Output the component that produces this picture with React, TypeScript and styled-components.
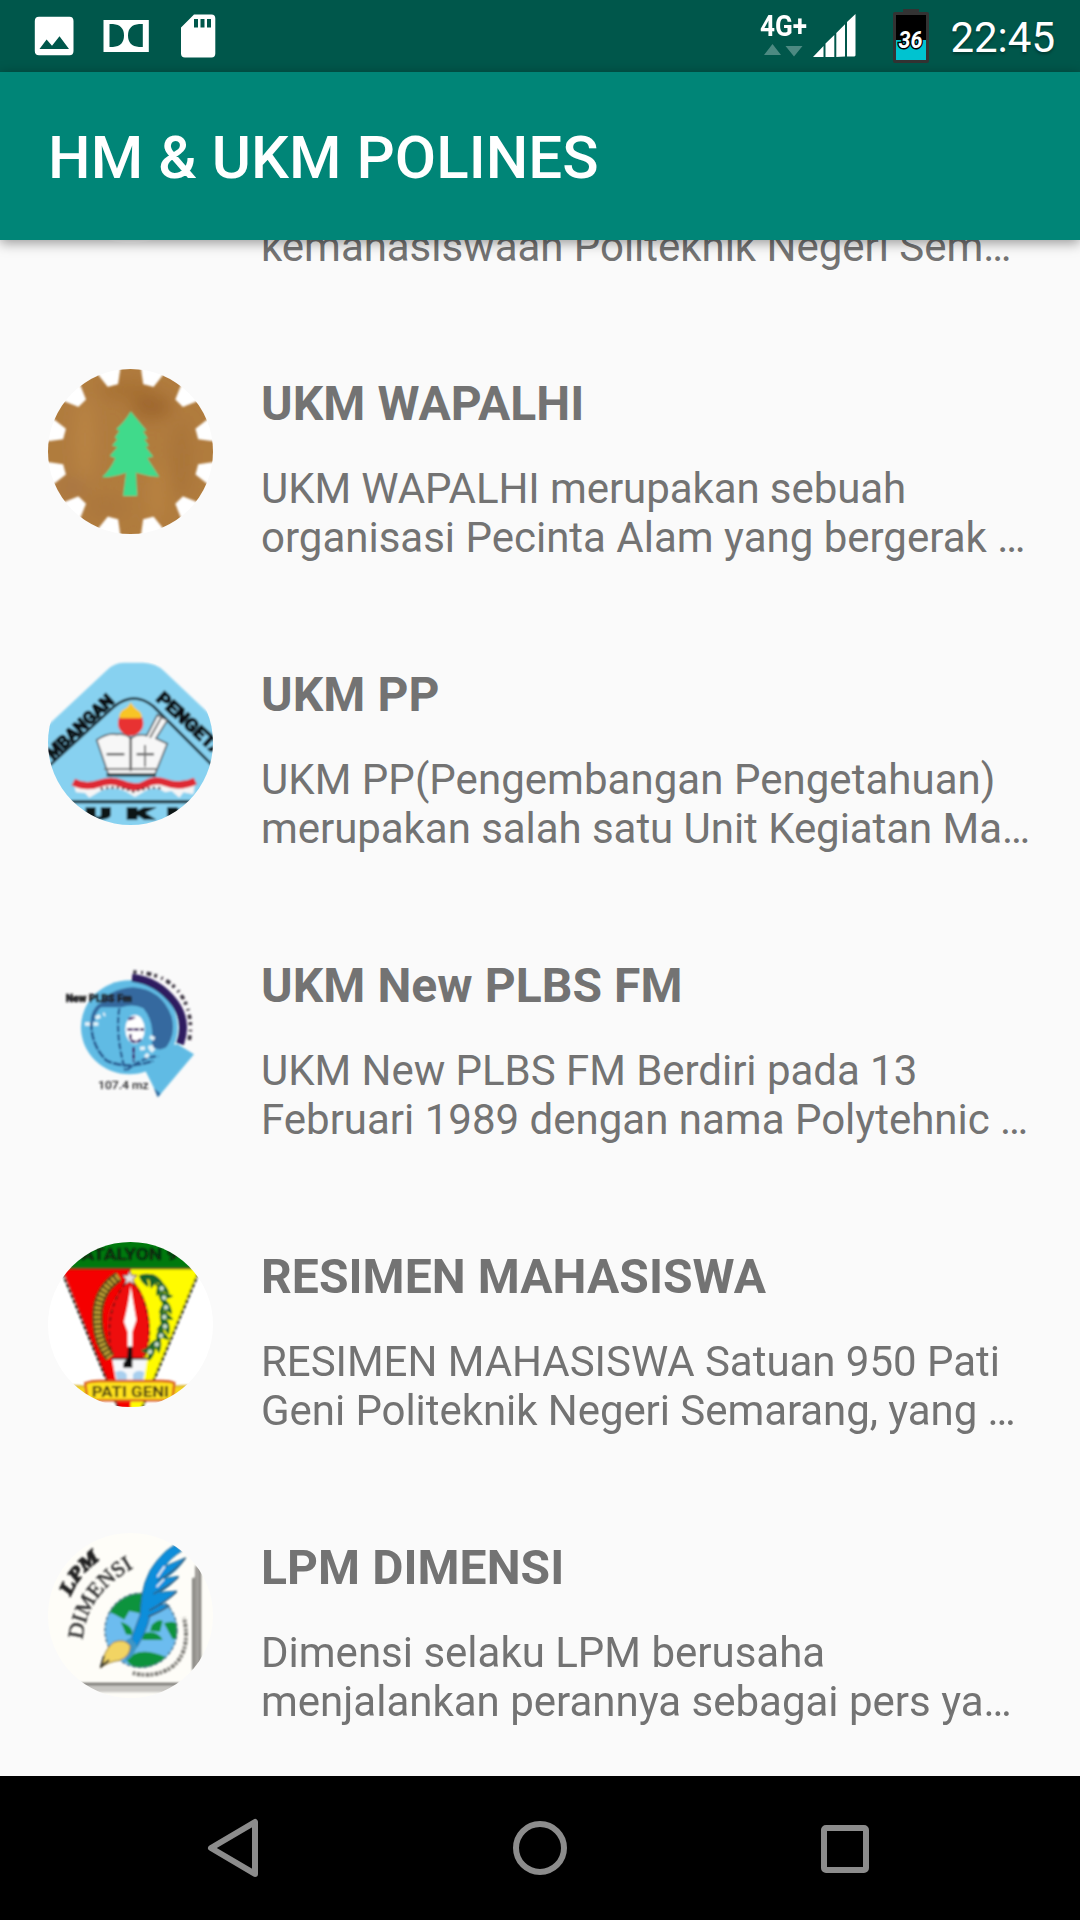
import React from "react";
import styled, { createGlobalStyle } from "styled-components";

const GlobalStyle = createGlobalStyle`
  * { box-sizing: border-box; }
  body { margin: 0; background: #fafafa; font-family: Roboto, "Noto Sans", sans-serif; }
`;

const Screen = styled.div`
  width: 1080px;
  height: 1920px;
  display: flex;
  flex-direction: column;
  overflow: hidden;
  background: #fafafa;
`;

const StatusBar = styled.header`
  height: 72px;
  flex: none;
  display: flex;
  justify-content: space-between;
  background: #00574b;
  padding: 0 25px 0 34px;
`;

const StatusGroup = styled.div`
  display: flex;
  align-items: flex-start;
`;

const StatusIcon = styled.svg<{ $left?: number; $top: number }>`
  display: block;
  flex: none;
  margin-left: ${(p) => p.$left ?? 0}px;
  margin-top: ${(p) => p.$top}px;
`;

const Network = styled.div`
  width: 50px;
  margin-top: 12px;
  display: flex;
  flex-direction: column;
  align-items: flex-start;
`;

const NetworkLabel = styled.span`
  color: #fff;
  font-size: 29px;
  font-weight: 700;
  line-height: 29px;
  transform: scaleX(0.9);
  transform-origin: left;
`;

const Clock = styled.time`
  margin-left: 21px;
  color: #fff;
  font-size: 42px;
  line-height: 49px;
  padding-top: 13px;
  text-shadow: 0 2px 3px rgba(0, 0, 0, 0.35);
`;

const AppBar = styled.div`
  height: 168px;
  flex: none;
  z-index: 1;
  display: flex;
  align-items: center;
  padding: 4px 48px 0;
  background: #008577;
  box-shadow: 0 3px 12px rgba(0, 0, 0, 0.4);
`;

const AppTitle = styled.h1`
  margin: 0;
  color: #fff;
  font-size: 60px;
  font-weight: 500;
  line-height: 70px;
  letter-spacing: 0.06px;
  white-space: nowrap;
`;

const List = styled.main`
  height: 1536px;
  flex: none;
  display: flex;
  flex-direction: column;
  justify-content: flex-end;
  overflow: hidden;
`;

const Row = styled.article`
  height: 291px;
  flex: none;
  display: flex;
  gap: 48px;
  padding: 48px 0 0 48px;
`;

const Avatar = styled.svg`
  width: 165px;
  height: 165px;
  flex: none;
  display: block;
  border-radius: 50%;
`;

const RowText = styled.div`
  padding-top: 7px;
`;

const RowTitle = styled.h2`
  margin: 0 0 32px;
  color: #737373;
  font-size: 48px;
  font-weight: 700;
  line-height: 56px;
  letter-spacing: 0.07px;
  white-space: nowrap;
`;

const RowLine = styled.p<{ $tracking?: number }>`
  margin: 0;
  color: #737373;
  font-size: 42px;
  line-height: 49px;
  letter-spacing: ${(p) => p.$tracking ?? 0}px;
  white-space: nowrap;
`;

const NavBar = styled.nav`
  height: 144px;
  flex: none;
  display: flex;
  justify-content: space-between;
  align-items: center;
  padding: 0 205px 0 201px;
  background: #000;
`;

const NavButton = styled.button`
  width: 64px;
  height: 64px;
  padding: 0;
  border: 0;
  background: none;
`;

const Soften = ({ id, amount }: { id: string; amount: number }) => (
  <filter id={id} x="-10%" y="-10%" width="120%" height="120%">
    <feGaussianBlur stdDeviation={amount} />
  </filter>
);

const gearPoints = Array.from({ length: 12 })
  .flatMap((_, i) =>
    [
      [-10.5, 206],
      [-6.8, 256],
      [6.8, 256],
      [10.5, 206],
    ].map(([offset, radius]) => {
      const a = ((i * 30 + offset - 90) * Math.PI) / 180;
      return `${(302 + radius * Math.cos(a)).toFixed(1)},${(305 + radius * Math.sin(a)).toFixed(1)}`;
    })
  )
  .join(" ");

const WapalhiLogo = () => (
  <Avatar viewBox="54 57 495 495">
    <defs>
      <Soften id="gearSoft" amount={3.2} />
      <Soften id="woodSoft" amount={24} />
      <clipPath id="gearClip"><polygon points={gearPoints} /></clipPath>
    </defs>
    <rect x="54" y="57" width="495" height="495" fill="#fff" />
    <g filter="url(#gearSoft)">
      <g clipPath="url(#gearClip)">
        <rect x="40" y="40" width="520" height="520" fill="#b07b3e" />
        <g filter="url(#woodSoft)">
          <ellipse cx="365" cy="170" rx="60" ry="38" fill="#9f682d" />
          <ellipse cx="290" cy="120" rx="80" ry="25" fill="#a67030" />
          <ellipse cx="165" cy="270" rx="28" ry="130" fill="#b98444" />
          <ellipse cx="455" cy="330" rx="30" ry="120" fill="#a97439" />
          <ellipse cx="380" cy="430" rx="28" ry="90" fill="#b8823f" />
          <ellipse cx="130" cy="410" rx="40" ry="30" fill="#a97644" />
          <ellipse cx="230" cy="470" rx="60" ry="28" fill="#aa763a" />
        </g>
      </g>
      <path
        fill="#40da8b"
        d="M302 184L350 242L339 243L354 266L343 268L357 287L347 290L370 320L352 324L388 381Q350 378 318 368L322 438H279L288 368Q250 382 216 382Q240 360 256 325L239 318L262 291L246 287L262 268L254 263L268 242L258 238Q285 215 302 184Z"
      />
    </g>
  </Avatar>
);

const PpLogo = () => (
  <Avatar viewBox="54 45 495 495">
    <defs><Soften id="ppSoft" amount={2.8} /></defs>
    <g filter="url(#ppSoft)">
      <path fill="#87d1f0" d="M40 254L232 74Q252 54 280 53H340Q378 54 402 78L570 237V560H40Z" />
      <path fill="none" stroke="#16252e" strokeWidth="8" d="M50 369L253 184Q312 137 370 184L560 374" />
      <g fill="#0b1216" stroke="#0b1216" strokeWidth="4" fontFamily="Roboto, sans-serif" fontWeight="900" fontSize="53">
        <text transform="translate(68 346) rotate(-43)" textLength="256" lengthAdjust="spacingAndGlyphs">MBANGAN</text>
        <text transform="translate(376 164) rotate(43)" textLength="256" lengthAdjust="spacingAndGlyphs">PENGETA</text>
      </g>
      <path fill="#f7f7f7" stroke="#596269" strokeWidth="5" d="M200 285Q235 262 260 268Q290 265 302 280Q325 264 350 272L382 210L412 226L378 280L412 296L375 388H235Z" />
      <path fill="none" stroke="#333" strokeWidth="6" d="M302 276V378M230 328H283M320 328H372" />
      <path fill="none" stroke="#777" strokeWidth="6" d="M222 372H382M345 300V365M360 278L395 215" />
      <path stroke="#1a3038" strokeWidth="9" d="M230 390H378" />
      <circle cx="302" cy="234" r="38" fill="#e83232" />
      <path fill="#f8c526" d="M302 172Q312 190 330 200Q340 215 332 220H270Q264 210 277 196Q295 188 302 172Z" />
      <path fill="#f5f5f5" d="M130 415Q165 440 235 412L310 425L382 410Q450 442 496 408L490 448L460 442L448 458L425 438L405 442Q375 420 345 438L315 456L285 438Q240 420 205 442L178 458L165 444L138 442Z" />
      <path fill="none" stroke="#de2b36" strokeWidth="22" d="M130 411Q165 430 205 416T275 416Q315 435 345 418T405 412Q450 430 496 408" />
      <path fill="none" stroke="#572b34" strokeWidth="7" strokeDasharray="7 9" d="M212 432Q265 420 310 440Q350 425 400 430" />
      <path stroke="#091419" strokeWidth="9" d="M100 470H500" />
      <g fill="#091419" stroke="#091419" strokeWidth="4" fontFamily="Roboto, sans-serif" fontWeight="900" fontSize="46">
        <text x="166" y="522" textLength="78" lengthAdjust="spacingAndGlyphs">U</text>
        <text x="289" y="522" textLength="80" lengthAdjust="spacingAndGlyphs">K</text>
        <text x="410" y="522" textLength="90" lengthAdjust="spacingAndGlyphs">M</text>
      </g>
    </g>
  </Avatar>
);

const PlbsLogo = () => (
  <Avatar viewBox="54 33 495 495">
    <defs><Soften id="fmSoft" amount={2.8} /></defs>
    <g filter="url(#fmSoft)">
      <ellipse cx="298" cy="262" rx="145" ry="141" fill="#60bbe4" />
      <path fill="#36699f" d="M205 202Q235 145 310 142Q395 148 425 230Q440 290 400 332L365 322Q375 245 340 205Q310 190 275 202Z" />
      <path fill="none" stroke="#2e1b60" strokeWidth="24" d="M306 113Q385 122 435 190Q474 245 450 312" />
      <path fill="none" stroke="#3a3440" strokeWidth="11" strokeDasharray="9 14 5 12 14 9" d="M310 96Q400 98 446 155Q492 215 478 300" />
      <path fill="#60bbe4" d="M355 340L442 312L492 343L385 470L345 390Z" />
      <path fill="#2d659d" d="M372 445L392 461L383 472Z" />
      <path fill="none" stroke="#285a91" strokeWidth="8" d="M184 245Q182 315 230 362Q290 390 370 362" strokeDasharray="26 4" />
      <path fill="none" stroke="#285a91" strokeWidth="7" d="M268 205Q255 285 286 392M290 390Q350 345 385 350" strokeDasharray="20 6" />
      <path fill="none" stroke="#36699f" strokeWidth="12" d="M188 245Q187 215 212 194" />
      <ellipse cx="315" cy="268" rx="29" ry="43" fill="#fff" />
      <path fill="none" stroke="#42226e" strokeWidth="8" strokeDasharray="16 3" d="M295 238L315 232M292 268H342M301 282V300Q318 312 333 298M311 322V365" />
      <path fill="none" stroke="#e6f5fb" strokeWidth="11" strokeDasharray="15 10" d="M197 234L225 222M165 252H210M360 290L374 298M330 326L375 320L346 352" />
      <g fill="#202022" stroke="#202022" strokeWidth="2" fontFamily="Roboto, sans-serif" fontWeight="900">
        <text x="107" y="186" fontSize="35" textLength="199" lengthAdjust="spacingAndGlyphs">New PLBS Fm</text>
        <text x="204" y="446" fontSize="34" fontWeight="500" strokeWidth="0" textLength="152" lengthAdjust="spacingAndGlyphs">107.4 mz</text>
      </g>
    </g>
  </Avatar>
);

const ResimenLogo = () => {
  const leaves = [
    [345, 160, 25], [373, 165, 65], [395, 190, 80], [402, 218, 35], [408, 247, 95],
    [403, 276, 60], [405, 304, 110], [393, 332, 70], [380, 358, 120], [360, 380, 140],
  ];
  return (
    <Avatar viewBox="54 51 495 495">
      <defs><Soften id="resSoft" amount={2.7} /></defs>
      <rect x="54" y="51" width="495" height="495" fill="#fff" />
      <g filter="url(#resSoft)">
        <path fill="#f50400" d="M96 128H302V560H270Z" />
        <path fill="#fffb00" d="M302 128H510L332 560H302Z" />
        <path fill="none" stroke="#181e15" strokeWidth="7" strokeDasharray="13 4" d="M98 145L265 550M505 145L336 550" />
        <rect x="50" y="40" width="510" height="88" fill="#04790b" />
        <path stroke="#143f13" strokeWidth="5" d="M90 130H510" />
        <text x="118" y="105" fill="#082c0a" stroke="#082c0a" strokeWidth="2" fontFamily="Roboto, sans-serif" fontWeight="700" fontSize="50" textLength="325" lengthAdjust="spacingAndGlyphs">BATALYON 9</text>
        <path fill="#ee0b08" d="M302 160Q355 210 360 310Q358 370 340 400H250Q225 340 232 270Q245 210 302 160Z" />
        <path fill="none" stroke="#6b1711" strokeWidth="5" strokeDasharray="13 9" d="M285 175Q220 265 245 390M310 175Q360 230 358 340L345 395" />
        <path fill="none" stroke="#473813" strokeWidth="31" d="M266 154Q195 200 203 295Q205 350 240 397" />
        <path fill="none" stroke="#b99c35" strokeWidth="21" strokeDasharray="9 5" d="M266 154Q195 200 203 295Q205 350 240 397" />
        <path fill="none" stroke="#4b7c26" strokeWidth="9" d="M345 155Q405 180 408 250Q405 335 357 391" />
        {leaves.map(([x, y, r], i) => (
          <g key={i} transform={`translate(${x} ${y}) rotate(${r})`}>
            <path fill="#16642a" d="M-20 0Q-8 -17 20 -20Q16 -6 6 0Q16 6 20 20Q-8 17 -20 0Z" />
            {i > 1 && <circle r="7" fill="#c9dccb" />}
          </g>
        ))}
        <path fill="#e8e4e4" stroke="#6e3434" strokeWidth="3" d="M299 137L305 151L321 151L309 163L314 179L299 170L284 179L288 163L277 151L293 151Z" />
        <path fill="#fff" d="M302 182Q309 230 319 285L307 320V365H293V320L282 290Q297 230 302 182Z" />
        <path fill="#f6f8fa" d="M246 400H352L342 468H258Z" />
        <path stroke="#222" strokeWidth="5" d="M244 401H357" />
        <path fill="#101011" d="M294 365H307V428H280V414L292 400Z" />
        <path fill="#a9cfee" d="M256 442Q275 430 290 447V466H262ZM343 442Q323 430 309 447V466H338Z" />
        <path fill="#f4d51d" stroke="#c99714" strokeWidth="4" d="M120 482L170 484V515H130M480 482L430 484V515H470" />
        <path fill="#ffe21a" stroke="#d85620" strokeWidth="7" d="M166 474Q185 468 205 468H395Q420 468 433 474L427 526H172Z" />
        <text x="185" y="516" fill="#453a18" fontFamily="Roboto, sans-serif" fontWeight="700" fontSize="46" textLength="232" lengthAdjust="spacingAndGlyphs">PATI GENI</text>
      </g>
    </Avatar>
  );
};

const DimensiLogo = () => (
  <Avatar viewBox="54 54 495 495">
    <defs>
      <Soften id="dimSoft" amount={2.7} />
      <path id="lpmArc" d="M122 244Q144 180 218 128" />
      <path id="dimensiArc" d="M158 374Q170 230 326 150" />
      <clipPath id="globeClip"><ellipse cx="333" cy="346" rx="108" ry="111" /></clipPath>
    </defs>
    <rect x="54" y="54" width="495" height="495" fill="#fefdf8" />
    <g filter="url(#dimSoft)">
      <path fill="#c7c6c2" d="M120 507H448L425 532H120Z" />
      <path stroke="#6e6d67" strokeWidth="8" d="M120 507H448" />
      <path fill="#b7b6b2" d="M486 190L495 185V150L514 158V446L486 468Z" />
      <path stroke="#66655f" strokeWidth="5" d="M490 190V465M510 160V448" />
      <path stroke="#8e8c86" strokeWidth="6" d="M499 155V455" />
      <g clipPath="url(#globeClip)">
        <rect x="220" y="230" width="230" height="235" fill="#6cbcef" />
        <path fill="#0d933c" d="M235 290Q270 220 350 235L330 295L298 288L283 314L252 297ZM272 320Q315 335 305 360L288 358ZM333 358Q380 340 398 375H338ZM365 330Q385 310 398 318L390 350L360 348ZM402 325Q455 305 450 370L428 373ZM290 438Q320 390 405 425Q380 470 320 465Z" />
      </g>
      <ellipse cx="333" cy="346" rx="108" ry="111" fill="none" stroke="#466780" strokeWidth="4" strokeDasharray="12 5" />
      <path fill="#078edb" stroke="#306b91" strokeWidth="3" d="M304 370L330 300Q333 190 382 136Q408 104 434 90L455 108Q420 130 405 154L467 128Q445 165 404 190L446 184Q425 211 390 232L440 228Q415 255 388 268L418 272Q390 290 360 304Q350 350 320 397Z" />
      <path fill="none" stroke="#fefdf8" strokeWidth="5" d="M404 154L382 186M402 192L380 216" />
      <path fill="none" stroke="#34546a" strokeWidth="4" d="M466 130Q435 168 383 198M445 187Q418 213 370 237M440 230Q415 255 358 287M418 272Q390 292 355 304" />
      <path fill="#3e96c7" d="M300 368L322 392Q310 430 280 442Q300 410 286 378Z" />
      <path fill="#f2d463" stroke="#8b743b" strokeWidth="3" d="M212 458Q222 405 250 382Q284 368 301 393Q301 423 270 436Q235 440 212 458Z" />
      <path fill="none" stroke="#383832" strokeWidth="6" d="M212 458L222 423M212 455L237 435" />
      <text fill="#212121" stroke="#212121" strokeWidth="4" fontSize="58" fontWeight="700" fontStyle="italic" fontFamily="'Liberation Serif', serif"><textPath href="#lpmArc" textLength="145" lengthAdjust="spacingAndGlyphs">LPM</textPath></text>
      <text fill="#2b2b2b" stroke="#2b2b2b" strokeWidth="1.5" fontSize="65" fontFamily="'Liberation Serif', serif"><textPath href="#dimensiArc" textLength="276" lengthAdjust="spacingAndGlyphs">DIMENSI</textPath></text>
      <path fill="none" stroke="#85847f" strokeWidth="12" strokeDasharray="8 4 12 3" d="M308 474Q368 490 420 460Q485 415 462 308" />
    </g>
  </Avatar>
);

const BlankLogo = () => (
  <Avatar viewBox="0 0 165 165"><rect width="165" height="165" fill="#fff" /></Avatar>
);

type Line = { text: string; tracking?: number };

const clubs: { Logo: () => React.JSX.Element; title: string; lines: Line[] }[] = [
  { Logo: BlankLogo, title: "", lines: [{ text: "" }, { text: "kemahasiswaan Politeknik Negeri Sem…", tracking: -0.03 }] },
  { Logo: WapalhiLogo, title: "UKM WAPALHI", lines: [{ text: "UKM WAPALHI merupakan sebuah", tracking: -0.08 }, { text: "organisasi Pecinta Alam yang bergerak …" }] },
  { Logo: PpLogo, title: "UKM PP", lines: [{ text: "UKM PP(Pengembangan Pengetahuan)", tracking: 0.04 }, { text: "merupakan salah satu Unit Kegiatan Ma…", tracking: -0.05 }] },
  { Logo: PlbsLogo, title: "UKM New PLBS FM", lines: [{ text: "UKM New PLBS FM Berdiri pada 13", tracking: -0.04 }, { text: "Februari 1989 dengan nama Polytehnic …" }] },
  { Logo: ResimenLogo, title: "RESIMEN MAHASISWA", lines: [{ text: "RESIMEN MAHASISWA Satuan 950 Pati", tracking: -0.04 }, { text: "Geni Politeknik Negeri Semarang, yang …", tracking: -0.06 }] },
  { Logo: DimensiLogo, title: "LPM DIMENSI", lines: [{ text: "Dimensi selaku LPM berusaha" }, { text: "menjalankan perannya sebagai pers ya…" }] },
];

export default function App() {
  return (
    <Screen>
      <GlobalStyle />
      <StatusBar>
        <StatusGroup>
          <StatusIcon $top={16} width="40" height="40" viewBox="0 0 40 40">
            <path fill="#fff" fillRule="evenodd" d="M5 .7H35.500Q39.500 .7 39.500 5V35Q39.500 39.200 35.500 39.200H5Q.8 39.200 .8 35V5Q.8 .7 5 .7ZM5.500 33H35L25.500 20.200L18 29.700L12.600 23.500Z" />
          </StatusIcon>
          <StatusIcon $left={29} $top={19} width="46" height="34" viewBox="0 0 46 34">
            <path fill="#fff" fillRule="evenodd" d="M.5 1H45.800V33H.5ZM6.500 5V28H10Q21 27 21 16.500T10 5ZM39.800 5V28H36Q25 27 25 16.500T36 5Z" />
          </StatusIcon>
          <StatusIcon $left={32} $top={14} width="35" height="44" viewBox="0 0 35 44">
            <path fill="#fff" fillRule="evenodd" d="M13 .5H30.500Q34.300 .5 34.300 4.500V39.500Q34.300 43.500 30.500 43.500H4Q0 43.500 0 39.500V13.500ZM13 5V13.500H17V5ZM19.500 5V13.500H23.500V5ZM26 5V13.500H30V5Z" />
          </StatusIcon>
        </StatusGroup>
        <StatusGroup>
          <Network>
            <NetworkLabel>4G+</NetworkLabel>
            <StatusIcon $left={4} $top={3} width="39" height="13" viewBox="0 0 39 13">
              <path fill="#4d8a82" d="M0 11L8.500 0L17 11ZM21.500 2H38.500L30 12.500Z" />
            </StatusIcon>
          </Network>
          <StatusIcon $left={3} $top={14} width="43" height="44" viewBox="0 0 43 44">
            <path fill="#fff" d="M0 43L10.500 32V43ZM12.500 43V29.500L21.300 21V43ZM23.300 43V19L32 10.300V42.500ZM34 42.500V8L42.500 0V41.500L41.500 42.500Z" />
          </StatusIcon>
          <StatusIcon $left={37} $top={9} width="36" height="54" viewBox="0 0 36 54">
            <path fill="#333" d="M10 0H26V3H34Q36 3 36 5V52Q36 54 34 54H2Q0 54 0 52V5Q0 3 2 3H10Z" />
            <rect x="3" y="6" width="30" height="45" fill="#000" />
            <rect x="3" y="31" width="30" height="20" fill="#00c3d0" />
            <text x="5.500" y="39" textLength="24" lengthAdjust="spacingAndGlyphs" fill="#fff" stroke="#000" strokeWidth="3" paintOrder="stroke" fontFamily="Roboto, sans-serif" fontStyle="italic" fontWeight="700" fontSize="24">36</text>
          </StatusIcon>
          <Clock>22:45</Clock>
        </StatusGroup>
      </StatusBar>
      <AppBar>
        <AppTitle>HM &amp; UKM POLINES</AppTitle>
      </AppBar>
      <List>
        {clubs.map(({ Logo, title, lines }, i) => (
          <Row key={i}>
            <Logo />
            <RowText>
              <RowTitle>{title || "\u00a0"}</RowTitle>
              {lines.map(({ text, tracking }, n) => (
                <RowLine key={n} $tracking={tracking}>{text || "\u00a0"}</RowLine>
              ))}
            </RowText>
          </Row>
        ))}
      </List>
      <NavBar>
        <NavButton aria-label="Back">
          <svg width="64" height="64" viewBox="0 0 64 64" fill="none" stroke="#8c8c8c" strokeWidth="6" strokeLinejoin="round">
            <path d="M54 6V58L10 32Z" />
          </svg>
        </NavButton>
        <NavButton aria-label="Home">
          <svg width="64" height="64" viewBox="0 0 64 64" fill="none" stroke="#8c8c8c" strokeWidth="6">
            <circle cx="34" cy="32" r="24" />
          </svg>
        </NavButton>
        <NavButton aria-label="Recent apps">
          <svg width="64" height="64" viewBox="0 0 64 64" fill="none" stroke="#8c8c8c" strokeWidth="6">
            <rect x="13" y="12" width="42" height="42" rx="2" />
          </svg>
        </NavButton>
      </NavBar>
    </Screen>
  );
}
